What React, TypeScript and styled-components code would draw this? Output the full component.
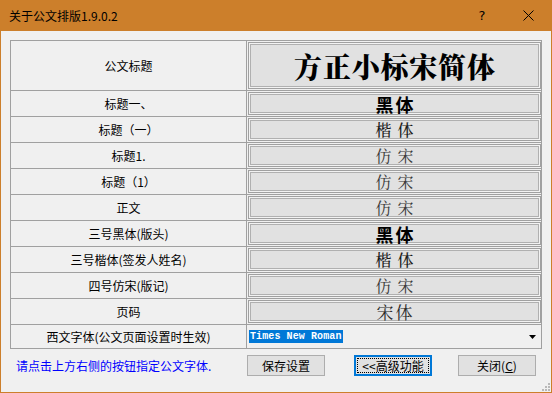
import React from 'react';
import styled, { createGlobalStyle, css } from 'styled-components';

const Global = createGlobalStyle`
  html, body { margin: 0; padding: 0; background: #f0f0f0; }
  body { font-family: "Noto Sans CJK SC", "Noto Sans", sans-serif; }
  * { box-sizing: border-box; }
`;

const ORANGE = '#cc7f2b';
const LINE = '#a0a0a0';
const SERIF = '"Noto Serif CJK SC", "Noto Sans CJK SC", serif';
const SANS = '"Noto Sans CJK SC", sans-serif';

const Window = styled.div`
  position: relative;
  width: 552px;
  height: 393px;
  border: 1px solid ${ORANGE};
  border-top: none;
  display: flex;
  flex-direction: column;
  background: #f0f0f0;
  overflow: hidden;
`;

const TitleBar = styled.div`
  height: 31px;
  flex: none;
  background: ${ORANGE};
  display: flex;
  align-items: center;
  padding-left: 8px;
`;

const TitleText = styled.div`
  flex: 1;
  font-size: 12px;
  color: #000;
  line-height: 1;
`;

const TitleButton = styled.div`
  width: 46px;
  height: 31px;
  display: flex;
  align-items: center;
  justify-content: center;
  font-family: "DejaVu Sans", sans-serif;
  font-size: 13px;
  color: #000;
`;

const Content = styled.div`
  flex: 1;
  padding: 9px 9px 0 9px;
  display: flex;
  flex-direction: column;
`;

const Table = styled.div`
  display: grid;
  width: 532px;
  grid-template-columns: 236px 295px;
  grid-template-rows: 50px repeat(9, 26px) 24px;
  border-top: 1px solid ${LINE};
  border-left: 1px solid ${LINE};
`;

const LabelCell = styled.div`
  border-right: 1px solid ${LINE};
  border-bottom: 1px solid ${LINE};
  display: flex;
  align-items: center;
  justify-content: center;
  font-size: 12px;
  color: #000;
  line-height: 1;
  white-space: nowrap;
`;

const SampleCell = styled.div`
  border-right: 1px solid ${LINE};
  border-bottom: 1px solid ${LINE};
  padding: 1px 0 1px 1px;
  display: flex;
`;

type Variant = 'title' | 'hei' | 'kai' | 'fang' | 'song';

const variants: Record<Variant, ReturnType<typeof css>> = {
  title: css`
    font-family: ${SERIF};
    font-size: 28px;
    font-weight: 900;
    letter-spacing: 0.8px;
    color: #000;
  `,
  hei: css`
    font-family: ${SANS};
    font-size: 18px;
    font-weight: 700;
    letter-spacing: 2px;
    color: #000;
  `,
  kai: css`
    font-family: ${SERIF};
    font-size: 16px;
    font-weight: 500;
    letter-spacing: 6px;
    color: #1a1a1a;
  `,
  fang: css`
    font-family: ${SERIF};
    font-size: 16px;
    font-weight: 400;
    letter-spacing: 6px;
    color: #3a3a3a;
  `,
  song: css`
    font-family: ${SERIF};
    font-size: 17px;
    font-weight: 400;
    letter-spacing: 2px;
    color: #2a2a2a;
  `,
};

const spacing: Record<Variant, number> = { title: 0.8, hei: 2, kai: 6, fang: 6, song: 2 };

const SampleBox = styled.div<{ $v: Variant }>`
  flex: 1;
  border: 1px solid ${LINE};
  box-shadow: inset 0 0 0 1px #f2f2f2, inset 0 0 0 2px #b0b0b0;
  background: #e1e1e1;
  display: flex;
  align-items: center;
  justify-content: center;
  line-height: 1;
  white-space: nowrap;
  padding-left: ${(p) => spacing[p.$v]}px;
  ${(p) => variants[p.$v]}
`;

const Combo = styled.div`
  flex: 1;
  display: flex;
  align-items: center;
  padding-left: 1px;
`;

const Selected = styled.span`
  background: #0078d7;
  color: #fff;
  font-family: "Liberation Mono", "DejaVu Sans Mono", monospace;
  font-weight: 700;
  font-size: 10px;
  line-height: 13px;
  padding: 0 1px;
  letter-spacing: 0.1px;
`;

const ComboSpacer = styled.div`
  flex: 1;
`;

const DropButton = styled.div`
  width: 17px;
  align-self: stretch;
  display: flex;
  align-items: center;
  justify-content: center;
`;

const Footer = styled.div`
  display: flex;
  align-items: center;
  margin-top: 6px;
`;

const Hint = styled.div`
  width: 237px;
  padding-left: 6px;
  color: #0000ff;
  font-size: 12px;
  line-height: 1;
  white-space: nowrap;
`;

const Button = styled.div<{ $gap: number; $focused?: boolean }>`
  position: relative;
  width: 78px;
  height: 21px;
  margin-left: ${(p) => p.$gap}px;
  border: 1px solid #adadad;
  background: #e1e1e1;
  display: flex;
  align-items: center;
  justify-content: center;
  font-size: 12px;
  line-height: 1;
  color: #000;
  white-space: nowrap;
  ${(p) =>
    p.$focused &&
    css`
      border-color: #0078d7;
      box-shadow: inset 0 0 0 1px #0078d7;
      &::after {
        content: '';
        position: absolute;
        inset: 2px;
        border: 1px dotted #000;
      }
    `}
`;

const Accel = styled.span`
  text-decoration: underline;
`;

const Grip = styled.svg`
  position: absolute;
  right: 1px;
  bottom: 1px;
`;

const rows: { label: string; sample: string; v: Variant }[] = [
  { label: '公文标题', sample: '方正小标宋简体', v: 'title' },
  { label: '标题一、', sample: '黑体', v: 'hei' },
  { label: '标题（一）', sample: '楷体', v: 'kai' },
  { label: '标题1.', sample: '仿宋', v: 'fang' },
  { label: '标题（1）', sample: '仿宋', v: 'fang' },
  { label: '正文', sample: '仿宋', v: 'fang' },
  { label: '三号黑体(版头)', sample: '黑体', v: 'hei' },
  { label: '三号楷体(签发人姓名)', sample: '楷体', v: 'kai' },
  { label: '四号仿宋(版记)', sample: '仿宋', v: 'fang' },
  { label: '页码', sample: '宋体', v: 'song' },
];

export default function App() {
  return (
    <>
      <Global />
      <Window>
        <TitleBar>
          <TitleText>关于公文排版1.9.0.2</TitleText>
          <TitleButton>?</TitleButton>
          <TitleButton>
            <svg width="11" height="11" viewBox="0 0 11 11">
              <path d="M0.5 0.5 L10.5 10.5 M10.5 0.5 L0.5 10.5" stroke="#000" strokeWidth="1" />
            </svg>
          </TitleButton>
        </TitleBar>
        <Content>
          <Table>
            {rows.map((r, i) => (
              <React.Fragment key={i}>
                <LabelCell>{r.label}</LabelCell>
                <SampleCell>
                  <SampleBox $v={r.v}>{r.sample}</SampleBox>
                </SampleCell>
              </React.Fragment>
            ))}
            <LabelCell>西文字体(公文页面设置时生效)</LabelCell>
            <SampleCell>
              <Combo>
                <Selected>Times New Roman</Selected>
                <ComboSpacer />
                <DropButton>
                  <svg width="7" height="4" viewBox="0 0 7 4">
                    <path d="M0 0 H7 L3.5 4 Z" fill="#000" />
                  </svg>
                </DropButton>
              </Combo>
            </SampleCell>
          </Table>
          <Footer>
            <Hint>请点击上方右侧的按钮指定公文字体.</Hint>
            <Button $gap={0}>保存设置</Button>
            <Button $gap={29} $focused>
              &lt;&lt;高级功能
            </Button>
            <Button $gap={26}>
              关闭(<Accel>C</Accel>)
            </Button>
          </Footer>
        </Content>
        <Grip width="10" height="10" viewBox="0 0 10 10">
          <g fill="#b8b8b8">
            <rect x="8" y="2" width="2" height="2" />
            <rect x="5" y="5" width="2" height="2" />
            <rect x="8" y="5" width="2" height="2" />
            <rect x="2" y="8" width="2" height="2" />
            <rect x="5" y="8" width="2" height="2" />
            <rect x="8" y="8" width="2" height="2" />
          </g>
        </Grip>
      </Window>
    </>
  );
}
